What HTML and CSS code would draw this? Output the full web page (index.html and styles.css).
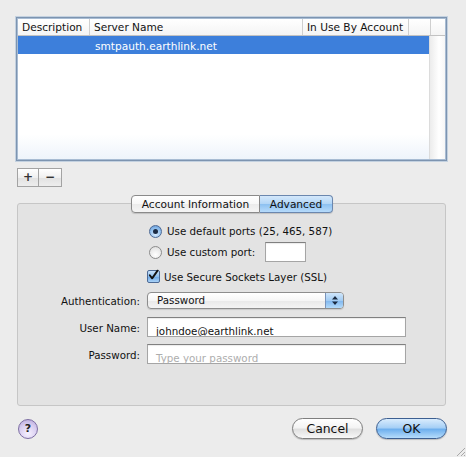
FILE: index.html
```html
<!DOCTYPE html>
<html>
<head>
<meta charset="utf-8">
<link rel="stylesheet" href="styles.css">
</head>
<body>
<div class="window">
  <div class="list">
    <div class="list-head">
      <div class="th">Description</div>
      <div class="th">Server Name</div>
      <div class="th">In Use By Account</div>
      <div class="th"></div>
      <div class="th last"></div>
    </div>
    <div class="list-body">
      <div class="rows">
        <div class="row-sel">
          <div class="td"></div>
          <div class="td">smtpauth.earthlink.net</div>
          <div class="td"></div>
        </div>
      </div>
      <div class="scroll"></div>
    </div>
  </div>

  <div class="pm">
    <div class="pm-btn">+</div>
    <div class="pm-btn">&minus;</div>
  </div>

  <div class="group">
    <div class="tabs">
      <div class="tab">Account Information</div>
      <div class="tab active">Advanced</div>
    </div>

    <div class="frow r1">
      <div></div>
      <div class="opt"><span class="radio on"></span><span>Use default ports (25, 465, 587)</span></div>
    </div>
    <div class="frow r2">
      <div></div>
      <div class="opt"><span class="radio"></span><span>Use custom port:</span><span class="field port"></span></div>
    </div>
    <div class="frow r3">
      <div></div>
      <div class="opt"><span class="check"><svg width="13" height="13" viewBox="0 0 13 13"><path d="M3 6.2 L5.6 9.6 L11.4 1.2" fill="none" stroke="#111" stroke-width="2" stroke-linecap="round" stroke-linejoin="round"/></svg></span><span class="check-label">Use Secure Sockets Layer (SSL)</span></div>
    </div>
    <div class="frow r4">
      <div class="lbl">Authentication:</div>
      <div class="popup"><span class="popup-text">Password</span><span class="popup-arrows"><svg width="8" height="11" viewBox="0 0 8 11"><path d="M4 1 L7 4.5 H1 Z M4 10 L7 6.5 H1 Z" fill="#1a2a40"/></svg></span></div>
    </div>
    <div class="frow r5">
      <div class="lbl">User Name:</div>
      <div class="field wide">johndoe@earthlink.net</div>
    </div>
    <div class="frow r6">
      <div class="lbl">Password:</div>
      <div class="field wide ph">Type your password</div>
    </div>
  </div>

  <div class="footer">
    <div class="help">?</div>
    <div class="spacer"></div>
    <div class="btn">Cancel</div>
    <div class="btn ok">OK</div>
  </div>

  <svg class="grip" width="12" height="12" viewBox="0 0 12 12"><path d="M11 3 L3 11 M11 7 L7 11 M11 10 L10 11" stroke="#a8a8a8" stroke-width="1"/></svg>
</div>
</body>
</html>
```

FILE: styles.css
```css
html, body {
  margin: 0;
  padding: 0;
}
body {
  background: #ececec;
  font-family: "DejaVu Sans", "Liberation Sans", sans-serif;
  font-size: 10.3px;
  color: #111;
  width: 466px;
  height: 457px;
  overflow: hidden;
}
.window {
  position: relative;
  box-sizing: border-box;
  height: 457px;
  padding: 17px 19px 0 16px;
  display: flex;
  flex-direction: column;
}

/* list */
.list {
  box-sizing: border-box;
  height: 144px;
  border: 1px solid #7d94b0;
  box-shadow: 0 0 0 1px #c3d1e0, inset 0 0 0 1px #a8bcd3;
  background: #fff;
  display: flex;
  flex-direction: column;
  padding: 1px;
}
.list-head {
  display: grid;
  grid-template-columns: 72px 213px 106px 22px 1fr;
  height: 16px;
  border-bottom: 1px solid #c2c2c2;
  background: linear-gradient(#ffffff, #f4f4f4);
  font-size: 10.6px;
}
.th {
  line-height: 16px;
  padding-left: 4px;
  border-right: 1px solid #cfcfcf;
  white-space: nowrap;
  overflow: hidden;
}
.th.last {
  border-right: none;
}
.list-body {
  flex: 1;
  display: flex;
}
.rows {
  flex: 1;
  background: linear-gradient(to bottom, #ffffff 80%, #eef4fb 100%);
}
.row-sel {
  display: grid;
  grid-template-columns: 72px 213px 1fr;
  height: 18px;
  background: #3d7fdb;
  color: #fff;
  font-size: 10.6px;
}
.row-sel .td {
  line-height: 20px;
  padding-left: 5px;
  white-space: nowrap;
}
.scroll {
  width: 15px;
  border-left: 1px solid #dcdcdc;
  background: linear-gradient(to right, #ececec, #ffffff 60%, #f6f6f6);
}

/* plus minus */
.pm {
  display: flex;
  margin-top: 7px;
  margin-left: 1px;
}
.pm-btn {
  box-sizing: border-box;
  width: 22px;
  height: 19px;
  border: 1px solid #a3a3a3;
  background: linear-gradient(#ffffff, #f0f0f0 50%, #e2e2e2 51%, #ededed);
  text-align: center;
  line-height: 16px;
  font-weight: bold;
  font-size: 12px;
  color: #333;
}
.pm-btn + .pm-btn {
  border-left: none;
  width: 23px;
}

/* group */
.group {
  box-sizing: border-box;
  margin: 16px 1px 0 1px;
  height: 203px;
  border: 1px solid #c6c6c6;
  border-radius: 3px;
  background: #e3e3e3;
  display: flex;
  flex-direction: column;
}
.tabs {
  display: flex;
  align-self: center;
  margin-top: -9px;
  margin-left: 1px;
  font-size: 10.6px;
}
.tab {
  box-sizing: border-box;
  height: 18px;
  line-height: 16px;
  width: 129px;
  text-align: center;
  border: 1px solid #8a8a8a;
  border-radius: 4px 0 0 4px;
  background: linear-gradient(#ffffff, #f7f7f7 50%, #ebebeb 51%, #f5f5f5);
  box-shadow: 0 1px 1px rgba(0,0,0,0.15);
}
.tab.active {
  width: 73px;
  border-left: none;
  border-radius: 0 4px 4px 0;
  border-color: #6b87ae;
  background: linear-gradient(#d4e8fb, #b1d5f6 50%, #8cc0f0 51%, #b6dbfb);
}

.frow {
  display: grid;
  grid-template-columns: 122px 1fr;
  column-gap: 7px;
  align-items: center;
}
.lbl {
  text-align: right;
  white-space: nowrap;
}
.r1 { margin-top: 11px; height: 14px; }
.r2 { margin-top: 4px; height: 20px; }
.r3 { margin-top: 8px; height: 14px; }
.r4 { margin-top: 8px; height: 17px; }
.r5 { margin-top: 8px; height: 20px; }
.r6 { margin-top: 7px; height: 20px; }
.r5 .lbl, .r6 .lbl {
  padding-top: 1px;
}

.opt {
  display: flex;
  align-items: center;
  white-space: nowrap;
}
.radio {
  box-sizing: border-box;
  width: 13px;
  height: 13px;
  border-radius: 50%;
  border: 1px solid #8c8c8c;
  background: radial-gradient(circle at 50% 70%, #ffffff, #e6e6e6 70%, #d0d0d0);
  margin-left: 2px;
  margin-right: 5px;
  position: relative;
}
.radio.on {
  border-color: #4d6a95;
  background: radial-gradient(circle at 50% 75%, #d8ecff, #8cbcec 60%, #5a8fcf);
}
.radio.on::after {
  content: "";
  position: absolute;
  left: 3px;
  top: 3px;
  width: 5px;
  height: 5px;
  border-radius: 50%;
  background: #1b2b44;
}
.field {
  box-sizing: border-box;
  background: #fff;
  border: 1px solid #a5a5a5;
  border-top-color: #808080;
  box-shadow: inset 0 1px 1px rgba(0,0,0,0.08);
}
.port {
  width: 41px;
  height: 20px;
  margin-left: 10px;
}
.wide {
  width: 259px;
  height: 20px;
  line-height: 20px;
  padding-top: 3px;
  padding-left: 8px;
  white-space: nowrap;
  overflow: hidden;
}
.ph {
  color: #adadad;
}
.check {
  box-sizing: border-box;
  width: 13px;
  height: 13px;
  border: 1px solid #4d6a95;
  border-radius: 2px;
  background: linear-gradient(#c8e1fa, #8ebfee 50%, #6aa6e6 51%, #a9d2f7);
  display: flex;
  margin-top: -1px;
}
.check svg {
  margin: -2px 0 0 -1px;
}
.check-label {
  margin-left: 4px;
}
.popup {
  box-sizing: border-box;
  width: 197px;
  height: 17px;
  border: 1px solid #8d8d8d;
  border-radius: 4px;
  background: linear-gradient(#ffffff, #f6f6f6 50%, #e9e9e9 51%, #f4f4f4);
  display: flex;
  overflow: hidden;
  box-shadow: 0 1px 1px rgba(0,0,0,0.12);
}
.popup-text {
  flex: 1;
  line-height: 15px;
  padding-left: 9px;
}
.popup-arrows {
  width: 17px;
  border-left: 1px solid #7a94bb;
  background: linear-gradient(#cfe6fb, #a3ccf3 50%, #7fb6ee 51%, #b3dbfb);
  display: flex;
  align-items: center;
  justify-content: center;
}

/* footer */
.footer {
  display: flex;
  align-items: center;
  margin-top: 12px;
  margin-left: 2px;
  margin-right: 0;
  height: 21px;
}
.help {
  box-sizing: border-box;
  width: 20px;
  height: 20px;
  border-radius: 50%;
  border: 1px solid #7d6ea3;
  background: radial-gradient(circle at 50% 75%, #f6f1ff, #d8cdf0 55%, #b3a2d8);
  text-align: center;
  line-height: 18px;
  font-weight: bold;
  font-size: 11px;
  color: #222;
}
.spacer {
  flex: 1;
}
.btn {
  box-sizing: border-box;
  width: 71px;
  height: 21px;
  border-radius: 11px;
  border: 1px solid #7e7e7e;
  background: linear-gradient(#ffffff, #f4f4f4 45%, #e0e0e0 55%, #f8f8f8);
  text-align: center;
  line-height: 19px;
  font-size: 12.4px;
  box-shadow: 0 1px 1px rgba(0,0,0,0.2);
}
.btn.ok {
  margin-left: 13px;
  border-color: #3c5f91;
  background: linear-gradient(#d9ecfd, #a7d0f6 45%, #6fb0ee 55%, #b6dcfb);
}
.grip {
  position: absolute;
  right: 0;
  bottom: 0;
}
```
